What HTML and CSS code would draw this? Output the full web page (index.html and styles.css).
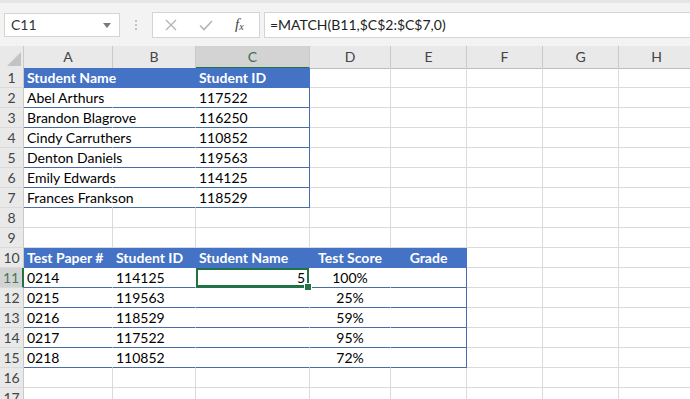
FILE: index.html
```html
<!DOCTYPE html>
<html lang="en">
<head>
    <title>Student Lookup</title>
    <link rel="stylesheet" href="styles.css">
</head>
<body>

    <!-- formula bar -->
    <div class="formula-bar">
        <div class="name-box">
            <span>C11</span>
            <svg class="drop" width="8" height="5" viewBox="0 0 8 5"><path d="M0 0h8L4 5z" fill="#7a7a7a"/></svg>
        </div>
        <div class="grip"><i></i><i></i><i></i></div>
        <div class="fx-buttons">
            <svg width="14" height="14" viewBox="0 0 14 14"><path d="M2 2l10 10M12 2L2 12" stroke="#b4b4b4" stroke-width="1.4" fill="none"/></svg>
            <svg width="16" height="14" viewBox="0 0 16 14"><path d="M2 7.5l4 4L14 3" stroke="#b4b4b4" stroke-width="1.6" fill="none"/></svg>
            <span class="fx">f<sub>x</sub></span>
        </div>
        <div class="formula">=MATCH(B11,$C$2:$C$7,0)</div>
    </div>

    <!-- sheet -->
    <div class="sheet">
        <div class="row col-heads">
            <span class="corner"><svg width="14" height="14" viewBox="0 0 14 14"><path d="M14 0v14H0z" fill="#c3c3c3"/></svg></span>
            <span>A</span><span>B</span><span class="sel">C</span><span>D</span><span>E</span><span>F</span><span>G</span><span>H</span>
        </div>

        <div class="row">
            <span class="num">1</span>
            <span class="th spill">Student Name</span><span class="th"></span><span class="th end">Student ID</span>
            <span></span><span></span><span></span><span></span><span></span>
        </div>
        <div class="row">
            <span class="num">2</span>
            <span class="td">Abel Arthurs</span><span class="td"></span><span class="td end">117522</span>
            <span></span><span></span><span></span><span></span><span></span>
        </div>
        <div class="row">
            <span class="num">3</span>
            <span class="td">Brandon Blagrove</span><span class="td"></span><span class="td end">116250</span>
            <span></span><span></span><span></span><span></span><span></span>
        </div>
        <div class="row">
            <span class="num">4</span>
            <span class="td">Cindy Carruthers</span><span class="td"></span><span class="td end">110852</span>
            <span></span><span></span><span></span><span></span><span></span>
        </div>
        <div class="row">
            <span class="num">5</span>
            <span class="td">Denton Daniels</span><span class="td"></span><span class="td end">119563</span>
            <span></span><span></span><span></span><span></span><span></span>
        </div>
        <div class="row">
            <span class="num">6</span>
            <span class="td">Emily Edwards</span><span class="td"></span><span class="td end">114125</span>
            <span></span><span></span><span></span><span></span><span></span>
        </div>
        <div class="row">
            <span class="num">7</span>
            <span class="td">Frances Frankson</span><span class="td"></span><span class="td end">118529</span>
            <span></span><span></span><span></span><span></span><span></span>
        </div>
        <div class="row">
            <span class="num">8</span>
            <span></span><span></span><span></span><span></span><span></span><span></span><span></span><span></span>
        </div>
        <div class="row">
            <span class="num">9</span>
            <span></span><span></span><span></span><span></span><span></span><span></span><span></span><span></span>
        </div>

        <div class="row">
            <span class="num">10</span>
            <span class="th">Test Paper #</span><span class="th">Student ID</span><span class="th">Student Name</span>
            <span class="th mid">Test Score</span><span class="th mid end">Grade</span>
            <span></span><span></span><span></span>
        </div>
        <div class="row">
            <span class="num sel">11</span>
            <span class="td">0214</span><span class="td">114125</span><span class="td active">5</span>
            <span class="td mid">100%</span><span class="td end"></span>
            <span></span><span></span><span></span>
        </div>
        <div class="row">
            <span class="num">12</span>
            <span class="td">0215</span><span class="td">119563</span><span class="td"></span>
            <span class="td mid">25%</span><span class="td end"></span>
            <span></span><span></span><span></span>
        </div>
        <div class="row">
            <span class="num">13</span>
            <span class="td">0216</span><span class="td">118529</span><span class="td"></span>
            <span class="td mid">59%</span><span class="td end"></span>
            <span></span><span></span><span></span>
        </div>
        <div class="row">
            <span class="num">14</span>
            <span class="td">0217</span><span class="td">117522</span><span class="td"></span>
            <span class="td mid">95%</span><span class="td end"></span>
            <span></span><span></span><span></span>
        </div>
        <div class="row">
            <span class="num">15</span>
            <span class="td">0218</span><span class="td">110852</span><span class="td"></span>
            <span class="td mid">72%</span><span class="td end"></span>
            <span></span><span></span><span></span>
        </div>
        <div class="row">
            <span class="num">16</span>
            <span></span><span></span><span></span><span></span><span></span><span></span><span></span><span></span>
        </div>
        <div class="row last">
            <span class="num">17</span>
            <span></span><span></span><span></span><span></span><span></span><span></span><span></span><span></span>
        </div>
    </div>

</body>
</html>
```

FILE: styles.css
```css
* {
    margin: 0;
    padding: 0;
    box-sizing: border-box;
}

body {
    width: 690px;
    height: 399px;
    overflow: hidden;
    background: #fff;
    font-family: Lato, "Open Sans", sans-serif;
    font-size: 14px;
    color: #000;
}

        /* Formula bar */

.formula-bar {
    height: 46px;
    background: #f3f3f3;
    border-top: 3px solid #e6e6e6;
    display: flex;
    align-items: center;
    padding: 0 0 0 4px;
}

.name-box {
    width: 116px;
    height: 24px;
    background: #fff;
    border: 1px solid #d4d4d4;
    display: flex;
    align-items: center;
    justify-content: space-between;
    padding: 0 8px 0 6px;
    color: #333;
    font-size: 14px;
}

.name-box .drop {
    margin-top: 1px;
}

.grip {
    width: 32px;
    display: flex;
    flex-direction: column;
    align-items: center;
    gap: 2px;
}

.grip i {
    width: 2px;
    height: 2px;
    background: #c4c4c4;
}

.fx-buttons {
    width: 108px;
    height: 26px;
    background: #fff;
    border: 1px solid #d4d4d4;
    display: flex;
    align-items: center;
    padding-left: 11px;
    gap: 20px;
}

.fx {
    font-family: "Liberation Serif", serif;
    font-style: italic;
    font-size: 15px;
    color: #444;
    margin-left: 1px;
}

.fx sub {
    font-size: 10px;
    vertical-align: -1px;
}

.formula {
    flex: 1;
    height: 26px;
    margin-left: 4px;
    background: #fff;
    border: 1px solid #d4d4d4;
    border-right: none;
    padding-left: 5px;
    line-height: 24px;
    color: #222;
}

        /* Sheet grid */

.row {
    display: grid;
    grid-template-columns: 24px 89px 83px 114px 81px 76px 76px 76px 76px;
    height: 20px;
}

.row.last {
    height: 11px;
    overflow: hidden;
}

.row > span {
    border-right: 1px solid #dadada;
    border-bottom: 1px solid #dadada;
    line-height: 19px;
    padding: 0 3px;
    white-space: nowrap;
    overflow: visible;
}

.col-heads {
    height: 22px;
    background: #e9e9e9;
}

.col-heads > span {
    text-align: center;
    line-height: 21px;
    color: #444;
    border-right: 1px solid #c9c9c9;
    border-bottom: 1px solid #bdbdbd;
}

.col-heads .corner {
    display: flex;
    align-items: flex-end;
    justify-content: flex-end;
    padding: 0 2px 2px 0;
}

.col-heads .sel {
    background: #d3d3d3;
    color: #3c6a4e;
    border-bottom: 2px solid #217346;
}

.row > .num {
    background: #e9e9e9;
    color: #444;
    text-align: center;
    padding: 0;
    border-right: 1px solid #c9c9c9;
    border-bottom: 1px solid #dadada;
}

.row > .num.sel {
    background: #d3d3d3;
    color: #3f7a58;
    border-right: 2px solid #217346;
}

        /* Tables */

.row > .th {
    background: #4472c4;
    color: #fff;
    font-weight: bold;
    border-right-color: #4472c4;
    border-bottom-color: #4472c4;
}

.row > .spill {
    position: relative;
    z-index: 1;
}

.row > .td {
    border-right-color: #fff;
    border-bottom-color: #4a6ca8;
}

.row > .end {
    border-right-color: #4a6ca8;
}

.row > .th.end {
    border-right-color: #4472c4;
}

.row > .mid {
    text-align: center;
}

.row > .active {
    position: relative;
    text-align: right;
    padding-right: 4px;
    box-shadow: inset 0 0 0 2px #217346;
    border-bottom-color: #217346;
}

.row > .active::after {
    content: '';
    position: absolute;
    right: -3px;
    bottom: -4px;
    width: 6px;
    height: 6px;
    background: #217346;
    border: 1px solid #fff;
}
```
